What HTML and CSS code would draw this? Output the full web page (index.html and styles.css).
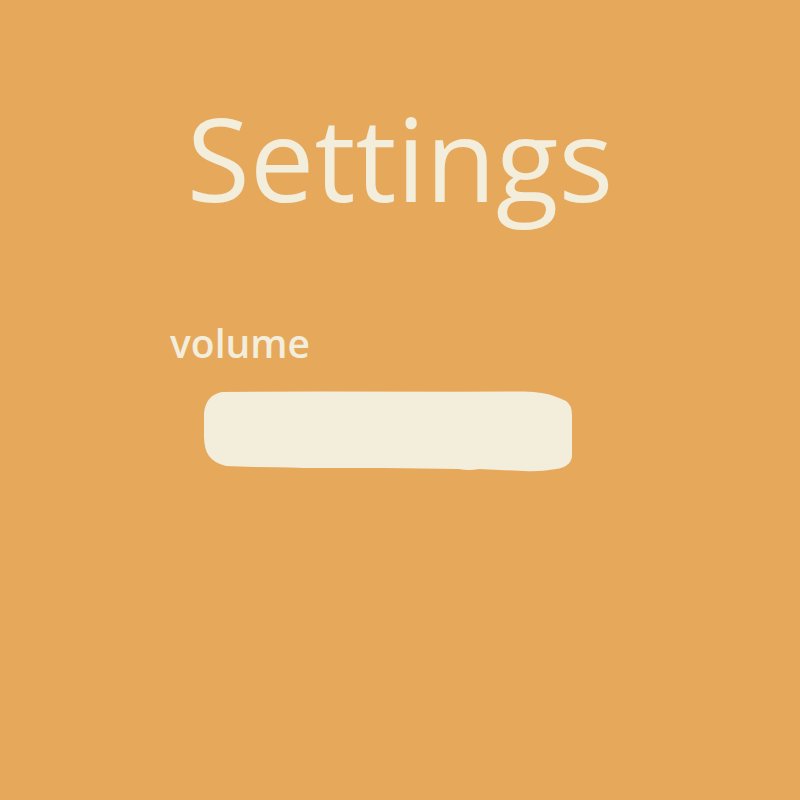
FILE: index.html
```html
<!DOCTYPE html>
<html>
<head>
<meta charset="utf-8">
<link rel="stylesheet" href="styles.css">
</head>
<body>
<main class="page">
  <h1 class="title">Settings</h1>
  <section class="setting">
    <div class="label">volume</div>
    <svg class="bar" width="372" height="82" viewBox="0 0 372 82">
      <path fill="#F3EDDB" d="M18 1 L120 0.5 L250 0.8 L320 0.5 Q340 1 350 5 Q358 8 362 10 Q368 14 368 24 L368 66 Q366 76 352 78 Q335 81 320 80 L275 78 Q265 80 255 78 L180 77 L100 77 Q70 76 50 76 L22 75 Q10 72 5 65 Q0 58 0 45 L0 22 Q2 4 18 1 Z"/>
    </svg>
  </section>
</main>
</body>
</html>
```
FILE: styles.css
```css
html, body {
  margin: 0;
  padding: 0;
  background: #E6A95C;
  height: 100%;
}
.page {
  font-family: "Open Sans", sans-serif;
  color: #F3EDDB;
  display: flex;
  flex-direction: column;
  align-items: center;
}
.title {
  margin: 83px 0 0 0;
  font-size: 115px;
  font-weight: 400;
  line-height: 150px;
}
.setting {
  align-self: flex-start;
  margin-left: 170px;
  margin-top: 82px;
  display: flex;
  flex-direction: column;
}
.label {
  font-size: 39px;
  font-weight: 600;
  line-height: 56px;
}
.bar {
  display: block;
  margin-left: 34px;
  margin-top: 20px;
}
```
